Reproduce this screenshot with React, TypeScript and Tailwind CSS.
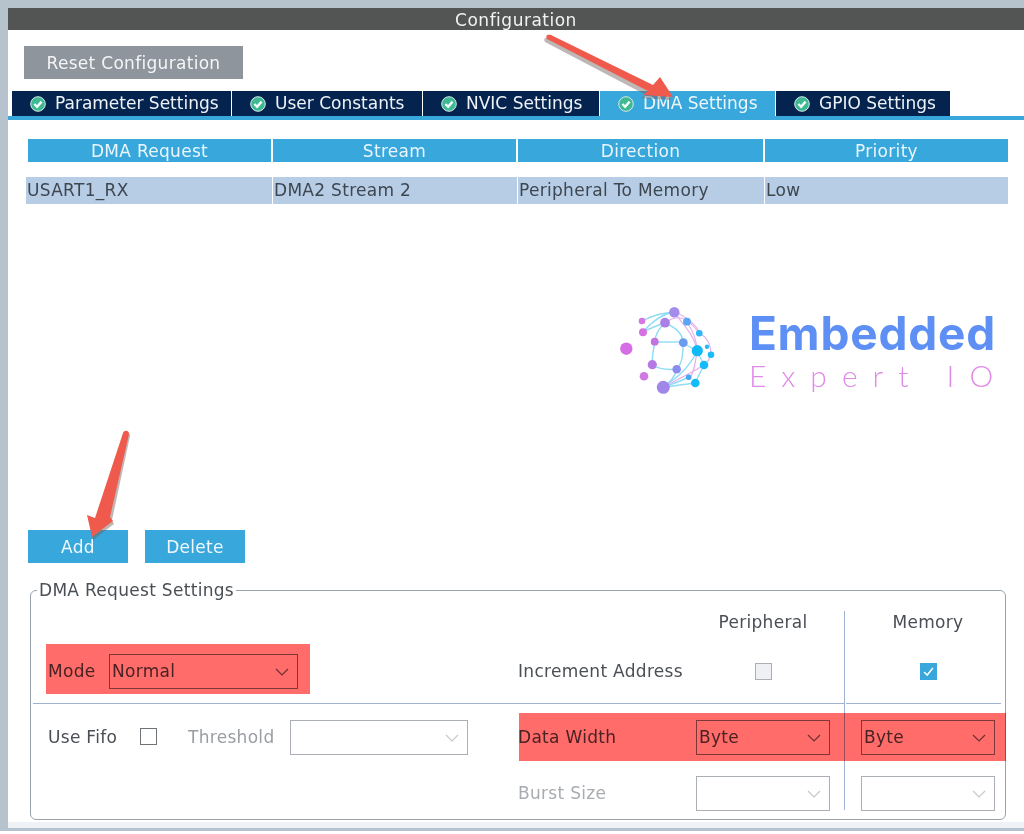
import { ReactNode } from 'react';

const tabs = ['Parameter Settings', 'User Constants', 'NVIC Settings', 'DMA Settings', 'GPIO Settings'];
const tabWidths = ['w-[219px]', 'w-[190px]', 'w-[176px]', 'w-[175px]', 'w-[174px]'];
const columns = ['DMA Request', 'Stream', 'Direction', 'Priority'];
const row = ['USART1_RX', 'DMA2 Stream 2', 'Peripheral To Memory', 'Low'];

function CheckBadge() {
  return (
    <svg width="16" height="16" viewBox="0 0 16 16" className="shrink-0">
      <circle cx="8" cy="8" r="7.3" fill="#3fb994" stroke="#d5ece4" strokeWidth="1" />
      <path d="M4.4 8 7.1 10.8 11.6 5.6" fill="none" stroke="#f4fbf8" strokeWidth="2.4" />
    </svg>
  );
}

function Chevron({ muted }: { muted?: boolean }) {
  return (
    <svg width="14" height="8" viewBox="0 0 14 8" className="shrink-0">
      <path d="M1 1 7 7 13 1" fill="none" stroke={muted ? '#c3c8cc' : '#6b7076'} strokeWidth="1.2" />
    </svg>
  );
}

function Select({ value, className, muted }: { value?: string; className: string; muted?: boolean }) {
  return (
    <div
      className={`flex h-[35px] items-center justify-between border pl-[2px] pr-[8px] text-[#4a4f55] ${
        muted ? 'border-[#a9afb5]' : 'border-[#7d8287]'
      } ${className}`}
    >
      <span>{value}</span>
      <Chevron muted={muted} />
    </div>
  );
}

function Box({ children, className }: { children?: ReactNode; className: string }) {
  return <div className={`h-[17px] w-[17px] border ${className}`}>{children}</div>;
}

function LogoMark() {
  return (
    <svg width="115" height="100" viewBox="0 0 115 100" className="shrink-0 blur-[0.5px]">
      <g fill="none" stroke="#8fdcf5" strokeWidth="1.4">
        <path d="M32 32 C42 20 52 14 63 12" />
        <path d="M31 21 C42 15 52 13 63 12" />
        <path d="M32 32 C40 28 47 25 54 23" />
        <path d="M54 23 C46 30 44 36 44 42 C42 50 41 58 41 65" />
        <path d="M44 42 H72" />
        <path d="M41 65 C50 70 58 70 66 69" />
        <path d="M66 69 C72 62 72 52 72 43 C72 34 66 28 54 23" />
        <path d="M52 87 C60 82 64 76 66 69" />
        <path d="M52 87 C62 80 76 72 86 51" />
        <path d="M52 87 C64 86 74 84 84 83" />
        <path d="M52 87 C62 84 70 81 78 77" />
        <path d="M72 43 L86 51 M86 51 L93 65 M84 83 L93 65" />
      </g>
      <g fill="none" stroke="#e5b0ec" strokeWidth="1.2">
        <path d="M63 12 C76 16 88 28 88 33 C94 36 100 42 100 55 C98 60 96 63 93 65" />
        <path d="M63 12 C72 24 84 36 86 51" />
        <path d="M76 22 C84 34 86 42 86 51 C84 66 82 76 78 77" />
        <path d="M54 23 C66 14 76 16 88 33" />
        <path d="M52 87 C66 80 82 72 93 65" />
      </g>
      {[
        [63.3, 12.3, 5.2, '#a58bec'],
        [31, 21, 3.3, '#d377e3'],
        [54, 22.7, 4.9, '#ab80e6'],
        [76, 21.7, 3.9, '#58a6f5'],
        [32, 32.3, 4, '#d470e2'],
        [88.3, 33.3, 3.3, '#2ab9f6'],
        [43.7, 41.7, 3.9, '#c272e1'],
        [72.3, 42.7, 4.4, '#6a9bf1'],
        [15.3, 48.7, 6.2, '#d56ee5'],
        [86.3, 50.7, 5.6, '#12b9f8'],
        [96, 46.7, 2.2, '#2ab9f6'],
        [100, 54.7, 3.3, '#1cbcf8'],
        [41.3, 64.7, 4.6, '#b578e4'],
        [93, 65, 4.3, '#14bbf8'],
        [65.7, 69.3, 4.3, '#8a8cf0'],
        [77.7, 77.3, 2.8, '#45a6f3'],
        [33, 76.3, 4.3, '#cf78e2'],
        [84.3, 83, 4.3, '#14bbf8'],
        [52.3, 87.3, 6.5, '#a186ea'],
      ].map(([x, y, r, fill]) => (
        <circle key={`${x}-${y}`} cx={x} cy={y} r={r} fill={fill as string} />
      ))}
    </svg>
  );
}

export default function App() {
  return (
    <div className="relative h-[834px] w-[1024px] overflow-hidden bg-white font-['DejaVu_Sans',sans-serif] text-[17px] leading-none tracking-[0.3px]">
      <div className="h-[831px] bg-[#b6c3cc] pl-2 pt-2">
        <div className="flex h-[820px] flex-col bg-white">
          <div className="flex h-[22px] shrink-0 items-center justify-center bg-[#535554] pt-[2px] tracking-[0.5px] text-[#f2f2f2]">
            Configuration
          </div>

          <button className="ml-4 mt-4 h-[33px] w-[219px] shrink-0 bg-[#8e959c] pt-[2px] text-[#f4f5f6]">
            Reset Configuration
          </button>

          <div className="mt-3 flex h-[29px] shrink-0 gap-px border-b-4 border-[#37a7dc] pl-1">
            {tabs.map((tab, i) => (
              <div
                key={tab}
                className={`flex h-[25px] items-center gap-[9px] pl-[18px] tracking-normal ${tabWidths[i]} ${
                  tab === 'DMA Settings' ? 'bg-[#37a7dc] text-[#eef7fc]' : 'bg-[#04244f] text-[#eef2f6]'
                }`}
              >
                <CheckBadge />
                {tab}
              </div>
            ))}
          </div>

          <div className="ml-5 mt-[19px] grid w-[980px] shrink-0 grid-cols-[243px_243px_245px_243px] gap-x-[2px] gap-y-[15px]">
            {columns.map((col) => (
              <div key={col} className="flex h-[23px] items-center justify-center bg-[#37a7dc] pt-[2px] text-[#eaf6fc]">
                {col}
              </div>
            ))}
            {row.map((cell, i) => (
              <div
                key={cell}
                className={`flex h-[27px] items-center bg-[#b6cde5] pl-[1px] text-[#3e4650] ${i === 0 ? '-ml-[2px]' : ''} ${
                  i < 3 ? '-mr-px' : ''
                }`}
              >
                {cell}
              </div>
            ))}
          </div>

          <div className="flex h-[326px] shrink-0 items-start justify-end gap-[23px] pr-[28px] pt-[96px]">
            <LogoMark />
            <div className="pt-[10px]">
              <div className="font-['Inter',sans-serif] text-[46px] font-bold leading-[46px] tracking-[0.8px] text-[#5d8ff5] blur-[0.4px]">
                Embedded
              </div>
              <div className="-mr-[15px] mt-[4px] font-['Lato',sans-serif] text-[30px] font-light leading-[30px] tracking-[15px] text-[#e08be8] blur-[0.3px]">
                Expert IO
              </div>
            </div>
          </div>

          <div className="ml-5 flex shrink-0 gap-[17px]">
            <button className="h-[33px] w-[100px] bg-[#37a7dc] pt-[2px] text-[#eef8fd]">Add</button>
            <button className="h-[33px] w-[100px] bg-[#37a7dc] pt-[2px] text-[#eef8fd]">Delete</button>
          </div>

          <fieldset className="ml-[22px] mt-[17px] w-[976px] shrink-0 rounded-md border border-[#9aa3ab] pb-[9px] text-[#4a4f55]">
            <legend className="ml-[6px] h-[20px] px-[2px] leading-[20px]">DMA Request Settings</legend>

            <div className="mt-[11px] grid grid-cols-[487px_178px_148px_1fr] grid-rows-[35px_57px_1px_66px_40px]">
              <div />
              <div />
              <div className="w-[134px] pt-[3px] text-center">Peripheral</div>
              <div className="border-l border-[#9fb2cf] pl-[16px] pt-[3px]">
                <div className="w-[134px] text-center">Memory</div>
              </div>

              <div className="flex items-start pl-[17px] pt-[8px]">
                <span className="flex h-[35px] w-[61px] items-center">Mode</span>
                <Select value="Normal" className="w-[189px]" />
              </div>
              <div className="flex items-start pt-[8px]">
                <span className="flex h-[35px] items-center">Increment Address</span>
              </div>
              <div className="pt-[8px]">
                <div className="flex h-[35px] w-[134px] items-center justify-center">
                  <Box className="border-[#a9afb5] bg-[#eef0f4]" />
                </div>
              </div>
              <div className="border-l border-[#9fb2cf] pl-[16px] pt-[8px]">
                <div className="flex h-[35px] w-[134px] items-center justify-center">
                  <Box className="border-[#37a7dc] bg-[#37a7dc]">
                    <svg viewBox="0 0 17 17" className="h-full w-full">
                      <path d="M3.5 9 7 12.5 13.5 4.5" fill="none" stroke="#ffffff" strokeWidth="1.7" />
                    </svg>
                  </Box>
                </div>
              </div>

              <div className="col-span-3 ml-[2px] bg-[#9fb2cf]" />
              <div className="mr-[4px] border-l border-[#9fb2cf]">
                <div className="ml-[1px] h-px bg-[#9fb2cf]" />
              </div>

              <div className="flex items-start pl-[17px] pt-[16px]">
                <span className="flex h-[35px] w-[92px] items-center">Use Fifo</span>
                <Box className="mt-[8px] border-[#6e7378]" />
                <span className="ml-[31px] flex h-[35px] w-[102px] items-center text-[#9a9ea3]">Threshold</span>
                <Select className="w-[178px]" muted />
              </div>
              <div className="pt-[16px]">
                <span className="flex h-[35px] items-center">Data Width</span>
              </div>
              <div className="pt-[16px]">
                <Select value="Byte" className="w-[134px]" />
              </div>
              <div className="border-l border-[#9fb2cf] pl-[16px] pt-[16px]">
                <Select value="Byte" className="w-[134px]" />
              </div>

              <div />
              <div className="pt-[6px]">
                <span className="flex h-[35px] items-center text-[#a8acb0]">Burst Size</span>
              </div>
              <div className="pt-[6px]">
                <Select className="w-[134px]" muted />
              </div>
              <div className="border-l border-[#9fb2cf] pl-[16px] pt-[6px]">
                <Select className="w-[134px]" muted />
              </div>
            </div>
          </fieldset>

          <div className="mt-auto h-[6px] shrink-0 bg-[#eef1f5]" />
        </div>
      </div>

      {/* annotations drawn on top of the screenshot */}
      <div className="absolute left-[46px] top-[644px] h-[50px] w-[264px] bg-[#ff6c6a] mix-blend-multiply" />
      <div className="absolute left-[519px] top-[713px] h-[48px] w-[487px] bg-[#ff6c6a] mix-blend-multiply" />

      <svg className="absolute left-[530px] top-[25px] h-[90px] w-[160px]" viewBox="0 0 160 90">
        <path d="M17 14 C15 10 18 9 21 10 L123 60 L130 52 L143 72 L113 70 L118 67 Z" fill="#6f5f5c" opacity="0.45" transform="translate(-2 3)" />
        <path d="M17 14 C15 10 18 9 21 10 L123 60 L130 52 L143 72 L113 70 L118 66 Z" fill="#f05a4c" />
      </svg>
      <svg className="absolute left-[80px] top-[425px] h-[120px] w-[55px]" viewBox="0 0 55 120">
        <path d="M43 8 C44 5 49 5 49 9 L31 93 L33 97 L12 113 L8 91 L15 94 Z" fill="#6f5f5c" opacity="0.45" transform="translate(1 2)" />
        <path d="M43 8 C44 5 49 5 49 9 L30 92 L33 96 L12 112 L7 90 L15 93 Z" fill="#f05a4c" />
      </svg>
    </div>
  );
}
